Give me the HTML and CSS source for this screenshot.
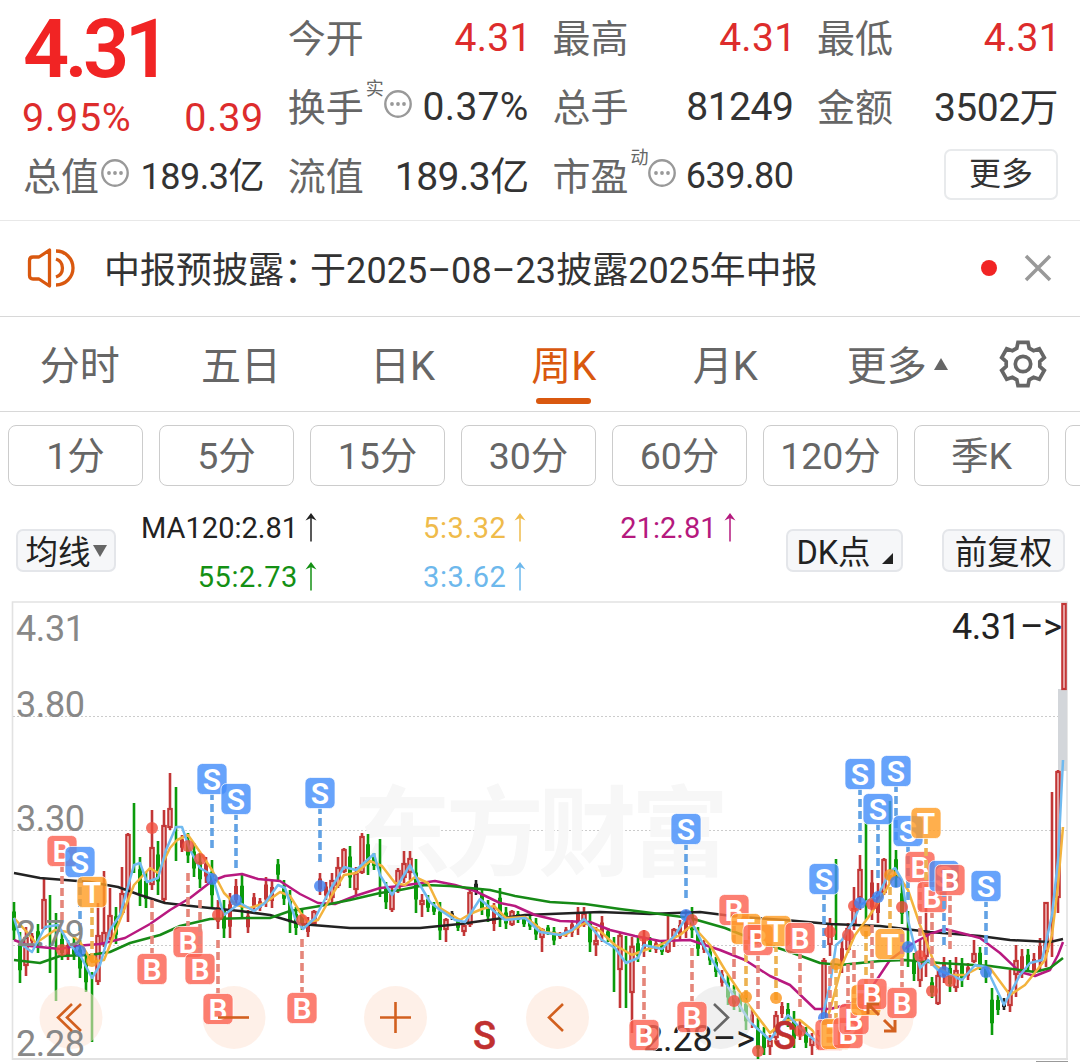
FILE: index.html
```html
<!DOCTYPE html>
<html lang="zh-CN">
<head>
    <meta charset="UTF-8">
    <meta name="viewport" content="width=device-width, initial-scale=1.0">
    <title>周K</title>
    <link rel="stylesheet" href="styles.css">
</head>
<body>
    <svg class="defs" width="0" height="0">
        <symbol id="more" viewBox="0 0 28 28">
            <circle cx="14" cy="14" r="12.7" fill="none" stroke="#999" stroke-width="2.4"/>
            <circle cx="8" cy="14" r="1.9" fill="#999"/>
            <circle cx="14" cy="14" r="1.9" fill="#999"/>
            <circle cx="20" cy="14" r="1.9" fill="#999"/>
        </symbol>
        <symbol id="up" viewBox="0 0 12 29">
            <path d="M6 28.5V3" stroke="currentColor" stroke-width="1.5"/>
            <path d="M6 0L11.5 7.5L6 5L0.5 7.5Z" fill="currentColor"/>
        </symbol>
    </svg>

    <section class="quote">
        <div class="price">
            <div class="last">4.31</div>
            <div class="change"><span>9.95%</span><span>0.39</span></div>
        </div>
        <div class="cell"><label>今开</label><b class="red">4.31</b></div>
        <div class="cell"><label>最高</label><b class="red">4.31</b></div>
        <div class="cell"><label>最低</label><b class="red">4.31</b></div>
        <div class="cell"><label>换手</label><sup>实</sup><svg class="more"><use href="#more"/></svg><b class="rate">0.37%</b></div>
        <div class="cell"><label>总手</label><b>81249</b></div>
        <div class="cell"><label>金额</label><b class="cjk">3502万</b></div>
        <div class="cell"><label>总值</label><svg class="more"><use href="#more"/></svg><b class="small cjk">189.3亿</b></div>
        <div class="cell"><label>流值</label><b class="cjk">189.3亿</b></div>
        <div class="cell"><label>市盈</label><sup>动</sup><svg class="more"><use href="#more"/></svg><b class="small">639.80</b></div>
        <div class="cell"><button class="more-btn">更多</button></div>
    </section>

    <section class="notice">
        <svg class="speaker" viewBox="0 0 48 42" fill="none" stroke="#d9580f" stroke-width="3.3">
            <path d="M22.500 3V39L12 32H6Q2.500 32 2.500 28.500V13.500Q2.500 10 6 10H12Z" stroke-linejoin="round"/>
            <path d="M29 12A9.500 9.500 0 0 1 29 30"/>
            <path d="M29 4A17 17 0 0 1 29 38"/>
        </svg>
        <p>中报预披露<i>：</i>于<span>2025–08–23</span>披露<span>2025</span>年中报</p>
        <em class="dot"></em>
        <svg class="close" viewBox="0 0 28 28"><path d="M2 2L26 26M26 2L2 26" stroke="#999" stroke-width="3.5"/></svg>
    </section>

    <nav class="tabs">
        <a>分时</a>
        <a>五日</a>
        <a>日K</a>
        <a class="active">周K</a>
        <a>月K</a>
        <a class="drop">更多</a>
        <svg class="gear" viewBox="-24 -24 48 48" fill="none" stroke="#666" stroke-width="3.7">
            <path d="M-6.200 -15.800L-5 -21.700H5L6.200 -15.800L10.600 -13.300L16.300 -15.200L21.300 -6.500L16.800 -2.500V2.500L21.300 6.500L16.300 15.200L10.600 13.300L6.200 15.800L5 21.700H-5L-6.200 15.800L-10.600 13.300L-16.300 15.200L-21.300 6.500L-16.800 2.500V-2.500L-21.300 -6.500L-16.300 -15.200L-10.600 -13.300Z"/>
            <circle r="7.700"/>
        </svg>
    </nav>

    <div class="periods">
        <button>1分</button>
        <button>5分</button>
        <button>15分</button>
        <button>30分</button>
        <button>60分</button>
        <button>120分</button>
        <button>季K</button>
        <button></button>
    </div>

    <section class="legend">
        <button class="ma-btn">均线<i></i></button>
        <div class="ma">
            <span class="c120">MA120:2.81<svg><use href="#up"/></svg></span>
            <span class="c5">5:3.32<svg><use href="#up"/></svg></span>
            <span class="c21">21:2.81<svg><use href="#up"/></svg></span>
            <span class="c55">55:2.73<svg><use href="#up"/></svg></span>
            <span class="c3">3:3.62<svg><use href="#up"/></svg></span>
        </div>
        <button class="dk-btn">DK点<i></i></button>
        <button class="fq-btn">前复权</button>
    </section>

    <svg id="chart" viewBox="0 600 1080 462"></svg>
    <script src="chart.js"></script>
</body>
</html>
```
FILE: styles.css
```css
* {
    box-sizing: border-box;
}
body {
    margin: 0;
    width: 1080px;
    height: 1062px;
    overflow: hidden;
    background: #fff;
    color: #333;
    font-family: Roboto, "Noto Sans CJK SC", sans-serif;
}
button {
    padding: 0;
    background: none;
    font-family: inherit;
    white-space: nowrap;
}
.defs {
    position: absolute;
}

/* quote header */
.quote {
    display: grid;
    grid-template-columns: repeat(4, 240px);
    grid-template-rows: repeat(3, 69px);
    column-gap: 24.7px;
    height: 221px;
    padding: 3px 0 0 24px;
    border-bottom: 1px solid #e8e8e8;
}
.price {
    grid-row: span 2;
    color: #f12424;
}
.last {
    height: 78px;
    margin-left: -1px;
    font-size: 81px;
    line-height: 93px;
    font-weight: 600;
    letter-spacing: -4.6px;
}
.change {
    display: flex;
    justify-content: space-between;
    margin-left: -2px;
    font-size: 39.500px;
    line-height: 73px;
    letter-spacing: 0.7px;
    color: #dd2c2c;
}
.cell {
    display: flex;
    align-items: center;
    font-size: 39px;
    white-space: nowrap;
}
.cell label {
    margin: 0 0 4px -1px;
    font-size: 38px;
    color: #666;
}
.cell b {
    margin-left: auto;
    font-weight: 400;
    letter-spacing: -0.5px;
}
.cell .red {
    margin-right: -3px;
    letter-spacing: 0.3px;
    color: #dd2c2c;
}
.cell .rate {
    letter-spacing: 0.3px;
}
.cell .small {
    font-size: 36px;
}
.cell .cjk {
    margin-bottom: 6px;
}
.cell sup {
    margin: 0 -2px 36px 2px;
    font-size: 18px;
    line-height: 18px;
    color: #666;
}
.more {
    width: 28px;
    height: 28px;
    margin: 0 0 6px 2px;
}
.more-btn {
    width: 114px;
    height: 51px;
    margin: 0 0 3px auto;
    border: 2px solid #e8eaec;
    border-radius: 7px;
    font-size: 32px;
    line-height: 46px;
    color: #333;
}

/* notice */
.notice {
    display: flex;
    align-items: center;
    height: 96px;
    padding: 0 28px 2px 27px;
    border-bottom: 1px solid #d8d8d8;
}
.speaker {
    width: 48px;
    height: 42px;
}
.notice p {
    margin: 0 0 2px 29px;
    font-size: 36px;
}
.notice i {
    font-style: normal;
    letter-spacing: -10px;
}
.notice span {
    letter-spacing: 0.1px;
}
.dot {
    width: 16px;
    height: 16px;
    margin-left: auto;
    border-radius: 50%;
    background: #f12424;
}
.close {
    width: 28px;
    height: 28px;
    margin-left: 27px;
}

/* tabs */
.tabs {
    display: grid;
    grid-template-columns: repeat(6, 161.400px) auto;
    height: 95px;
    margin-left: -1px;
    border-bottom: 1px solid #d8d8d8;
    font-size: 40px;
    line-height: 100px;
    text-align: center;
    color: #666;
}
.tabs a {
    position: relative;
}
.tabs .active {
    color: #d9580f;
}
.active::after {
    content: "";
    position: absolute;
    left: 53px;
    top: 81px;
    width: 55px;
    height: 6px;
    border-radius: 3px;
    background: #d9580f;
}
.drop::after {
    content: "";
    position: absolute;
    left: 128px;
    top: 41px;
    border: 7px solid transparent;
    border-top: 0;
    border-bottom: 12px solid #666;
}
.gear {
    width: 48px;
    height: 48px;
    margin: 23px 0 0 32px;
}

/* periods */
.periods {
    display: flex;
    gap: 16px;
    overflow: hidden;
    padding: 13px 0 0 8px;
}
.periods button {
    flex: 0 0 135px;
    height: 61px;
    border: 1.500px solid #ccc;
    border-radius: 8px;
    font-size: 37.500px;
    line-height: 54px;
    color: #666;
}

/* moving averages */
.legend {
    display: flex;
    align-items: flex-start;
    height: 114px;
    padding: 43px 15px 0 16px;
}
.legend button {
    height: 43px;
    padding-top: 3px;
    border: 2px solid #e4e6ea;
    border-radius: 7px;
    background: #f6f7f9;
    font-size: 32.500px;
    line-height: 38px;
    color: #222;
}
.ma-btn {
    width: 100px;
}
.ma-btn i {
    display: inline-block;
    margin: 0 0 7px 2px;
    border: 7px solid transparent;
    border-bottom: 0;
    border-top: 12px solid #666;
}
.ma {
    display: grid;
    grid-template-columns: 201px 208.500px 210px;
    grid-auto-rows: 49px;
    margin-top: -26px;
}
.ma span {
    display: flex;
    align-items: center;
    justify-content: flex-end;
    font-size: 29px;
}
.ma svg {
    width: 12px;
    height: 29px;
    margin-left: 7px;
}
.c120 {
    color: #222;
}
.c5 {
    color: #efbb4b;
}
.c21 {
    color: #b5197e;
}
.c55 {
    color: #149014;
}
.c3 {
    color: #6db8ec;
}
.c5, .c55, .c3 {
    letter-spacing: 0.6px;
}
.dk-btn {
    width: 117px;
    margin-left: auto;
}
.dk-btn i {
    display: inline-block;
    margin-left: 11px;
    border-left: 11px solid transparent;
    border-bottom: 11px solid #222;
}
.fq-btn {
    width: 123px;
    margin-left: 39px;
}

/* chart */
#chart {
    display: block;
    width: 1080px;
    height: 462px;
}
.watermark {
    font-size: 98px;
    font-weight: 700;
    fill: #f7f7f7;
}
.axis {
    font-size: 36px;
    fill: #888;
}
.mark {
    font-size: 36px;
    fill: #222;
}
.sell {
    font-size: 38px;
    font-weight: 500;
    fill: #c03030;
    stroke: #c03030;
    stroke-width: 0.5px;
}
.badge {
    font-size: 30px;
    font-weight: 600;
    fill: #fff;
    text-anchor: middle;
}
```
FILE: chart.js
```javascript
// one entry per week: colour, high, low, then body top and bottom where it is hollow
const candles = `g902-940 g932-983 r927-976-937-966 r933-944 g924-953 r878-930-899-929 g895-973 g913-1001 g932-960 r940-960
g937-960 g940-978 g953-992 g972-1042 r903-985-935-982 r871-947-932-945 r888-940-915-939 g907-944 r867-915-893-913 r833-922-834-890
g803-873 g857-906 g872-908 r810-890-847-885 g841-895 r810-902-825-900 r773-830-808-828 g787-861 r835-852 g833-863
g843-877 g853-888 r857-883 g860-907 r900-929 g900-938 r893-938 r879-907 g875-918 r910-933
r893-910 r898-911 r877-907 r880-908 g859-880 g880-905 g890-933 g907-935 g910-930 r917-937
r910-925-911-924 r873-895 r882-900 r873-903-880-898 r857-888-867-886 r848-873-849-872 g846-888 r867-895-873-890 r833-874-836-873 g834-875
g853-870 g839-897 g882-909 r887-912-892-910 r868-893-870-891 r851-883-863-878 r851-880-858-873 g859-913 r894-917-900-905 g895-912
g902-915 g902-940 r918-942-919-930 k911-920 g918-931 r922-936-925-932 r887-927-892-925 k880-895 g888-915 g900-922
r903-931 g888-927 g907-929 r910-926-911-925 g911-923 g916-927 g916-930 g918-940 r928-952-929-938 g925-935
g927-945 r932-939 r927-937 r920-937 r907-935 r907-927-913-925 g913-952 r927-956-940-945 r916-942 g928-942
g937-992 r933-1008-935-970 g936-1008 r937-1033-946-993 g937-962 r930-957 g937-952 r940-953 g942-955 r915-953-942-952
r928-947-929-937 r920-940 r910-938 g907-938 g927-956 r940-953 g947-965 g957-977 r970-987 g975-1005
g985-1010 g993-1012 g995-1030 r1010-1028 g1018-1059 g1027-1055 r1035-1055-1040-1047 r1011-1040-1015-1038 r1002-1018 g1003-1027
g1011-1048 r1020-1040 g1027-1048 r1033-1055-1038-1046 r1030-1050 r958-1027-960-1025 r918-956-923-945 g859-940 r940-973 r923-953-928-950
r887-930-908-925 r855-910-869-898 g823-920 r870-920 r883-923 r858-895-859-893 g801-870 g850-887 g883-924 g911-967
g953-981 r940-987-957-981 r900-977-933-957 g977-998 r970-1005-975-1004 r957-983 g960-992 r957-992-970-988 g958-987 r963-980
r940-963-953-962 g947-970 g960-983 g988-1035 g995-1015 k998-1010 r970-1012-990-1006 r945-997-960-975 r949-978 g949-972
r953-977 r938-970 r902-967-902-952 r792-957 r770-913-771-898 r603-690-603-690`.split(/\s+/);

const lines = {
    '#222222': '14,873 40,878 90,882 118,887 140,895 165,903 200,907 240,911 270,915 300,924 350,928 420,928 460,924 525,915 600,912 650,914 700,912 740,917 785,920 830,924 880,926 930,932 980,936 1010,940 1050,942 1063,939',
    '#b8197f': '14,940 30,946 60,949 75,946 100,944 125,938 150,924 170,910 190,898 212,881 225,876 242,874 258,879 280,881 300,894 318,903 335,904 355,896 380,888 400,886 435,881 455,885 475,891 500,903 515,906 535,915 560,921 590,922 610,930 635,936 660,941 690,940 720,950 745,960 770,976 790,985 815,1009 830,1009 850,1004 870,990 890,960 910,945 930,934 945,929 965,934 980,938 1000,953 1020,972 1035,976 1050,970 1058,955 1063,942',
    '#168a16': '14,960 40,963 60,956 90,955 110,952 130,943 160,935 180,926 210,919 250,918 270,918 290,911 320,906 350,900 380,893 400,890 425,885 450,886 490,890 515,896 550,902 585,904 620,909 660,914 690,918 725,928 760,942 790,952 820,963 840,965 880,961 905,960 940,963 990,966 1035,972 1050,968 1063,958',
    '#f3b33d': '14,918 25,930 36,943 55,930 68,932 80,942 92,962 104,960 116,930 128,900 134,885 150,868 158,873 170,848 177,840 188,835 200,852 212,870 224,893 236,905 250,908 265,903 280,892 290,896 300,912 308,922 318,920 332,895 344,875 356,873 370,861 382,866 395,883 405,885 415,877 428,883 440,908 460,920 470,914 482,909 494,906 506,918 525,917 545,932 565,935 585,923 600,931 615,945 632,955 645,950 660,945 680,935 692,925 710,945 725,970 745,1000 770,1033 785,1020 800,1020 812,1030 820,1040 830,1010 842,965 855,935 870,915 886,890 896,872 908,890 920,925 935,965 950,975 965,975 980,967 990,968 1010,995 1025,985 1045,960 1052,935 1058,885 1063,827',
    '#70baf0': '14,918 22,945 32,952 45,927 58,925 70,945 80,955 92,978 100,965 110,930 120,915 134,865 140,863 147,882 158,878 166,850 176,827 182,827 190,850 200,868 212,875 224,915 240,903 254,911 265,903 278,885 285,888 295,918 303,929 315,918 330,890 344,867 356,870 374,854 380,875 392,895 410,865 420,885 430,902 440,910 455,920 465,922 480,899 495,912 505,920 525,918 540,932 560,935 572,930 584,919 602,940 615,948 626,963 638,958 644,945 662,949 675,935 688,915 705,948 730,990 750,1022 770,1040 788,1015 800,1028 812,1038 820,1045 824,1010 830,985 836,945 842,940 854,920 860,905 878,895 890,872 895,868 902,880 908,920 920,968 928,960 938,970 950,975 962,980 975,965 986,967 1004,1005 1020,975 1030,963 1042,960 1052,915 1058,860 1063,760'
};

// letter, x, badge y, dot y
const trades = [
    ['B', 62, 851, 950], ['S', 80, 862, 951], ['T', 92, 892, 961], ['B', 152, 969, 828], ['B', 188, 942, 846],
    ['B', 200, 969, 859], ['S', 212, 779, 879], ['B', 218, 1009, 915], ['S', 236, 799, 900], ['B', 302, 1008, 920],
    ['S', 320, 793, 886], ['B', 644, 1035, 936], ['S', 686, 829, 915], ['B', 692, 1017, 920], ['B', 734, 910, 1001],
    ['T', 746, 929, 997], ['B', 758, 940, 1051], ['T', 776, 931, 998], ['B', 800, 938, 1031], ['S', 824, 879, 1018],
    ['B', 830, 1035, 932], ['T', 836, 1034, 964], ['B', 848, 1033, 935], ['B', 854, 1019, 906], ['S', 860, 774, 903],
    ['T', 866, 1000, 931], ['B', 872, 994, 904], ['S', 878, 809, 897], ['T', 890, 944, 875], ['S', 896, 771, 882],
    ['B', 902, 1003, 907], ['S', 908, 831, 947], ['B', 920, 867, 956], ['T', 926, 823, null], ['B', 932, 897, 991],
    ['S', 944, 876, 972], ['B', 950, 880, 981], ['S', 986, 886, 972]
];

const candleColors = { r: '#c23636', g: '#0b9b0b', k: '#222' };
const tradeColors = { B: ['#fb6353', '#f04c3c', '#e5867a'], S: ['#458ffa', '#3b7ef0', '#62a2e4'], T: ['#ff9e26', '#fb9418', '#edb252'] };

let svg = '';

// frame and grid
svg += '<path d="M12.500 1060V602H1067V1060" fill="none" stroke="#e2e2e2" stroke-width="1.600"/>';
svg += '<path d="M12 1059H1068" stroke="#e2e2e2" stroke-width="2"/>';
svg += '<path d="M1036 1061.500H1068" stroke="#999"/>';
[716.5, 830.5, 945.5].forEach(y => {
    svg += `<path d="M13 ${y}H1067" stroke="#ccc" stroke-dasharray="2 2"/>`;
});
svg += '<text class="watermark" x="353" y="868" textLength="376">东方财富</text>';
svg += '<rect x="1058" y="689" width="9" height="82" fill="#d3d6da"/>';

candles.forEach((c, i) => {
    const x = 14 + i * 6;
    const color = candleColors[c[0]];
    const [high, low, top, bottom] = c.slice(1).split('-').map(Number);
    if (top) {
        if (top > high) svg += `<path d="M${x} ${high}V${top}" stroke="${color}" stroke-width="2.600"/>`;
        if (low > bottom) svg += `<path d="M${x} ${bottom}V${low}" stroke="${color}" stroke-width="2.600"/>`;
        svg += `<rect x="${x - 1.7}" y="${top + 1}" width="3.400" height="${Math.max(bottom - top - 2, 1)}" fill="#fbe6e6" stroke="${color}" stroke-width="2.200"/>`;
    } else {
        svg += `<path d="M${x} ${high}V${low}" stroke="${color}" stroke-width="2.600"/>`;
        if (low - high < 55) {
            const pad = (low - high) * 0.25;
            svg += `<path d="M${x} ${high + pad}V${low - pad}" stroke="${color}" stroke-width="4"/>`;
        }
    }
});

for (const color in lines) {
    svg += `<polyline points="${lines[color]}" fill="none" stroke="${color}" stroke-width="2.500" stroke-linejoin="round"/>`;
}

// round control buttons
[71, 234, 395.5, 557.5, 720.5, 882].forEach((x, i) => {
    svg += `<circle cx="${x}" cy="1017.500" r="31.500" fill="${i === 4 ? '#e4e4e4' : '#fde3d6'}" fill-opacity="0.550"/>`;
});
svg += '<text class="mark" x="643" y="1051" textLength="112">2.28–&gt;</text>';
svg += '<text class="mark" x="952" y="639" textLength="110">4.31–&gt;</text>';

trades.forEach(([letter, x, y, dot]) => {
    const [fill, dotFill, dash] = tradeColors[letter];
    const dir = dot !== null && dot < y ? -1 : 1;
    svg += `<path d="M${x} ${y + dir * 69}V${y + dir * 15}" stroke="${dash}" stroke-width="3.600" stroke-dasharray="8 4" fill="none"/>`;
    if (dot !== null) svg += `<circle cx="${x}" cy="${dot}" r="6" fill="${dotFill}" fill-opacity="0.800"/>`;
    svg += `<rect x="${x - 15}" y="${y - 15.5}" width="30" height="31" rx="5.500" fill="${fill}" fill-opacity="0.820" stroke="#fff" stroke-opacity="0.700"/>`;
    svg += `<text class="badge" x="${x}" y="${y + 10.5}">${letter}</text>`;
});

svg += '<text class="sell" x="473" y="1049">S</text><text class="sell" x="773" y="1049">S</text>';
[['4.31', 641], ['3.80', 717], ['3.30', 831], ['2.79', 946], ['2.28', 1056]].forEach(([text, y]) => {
    svg += `<text class="axis" x="16" y="${y}" textLength="69">${text}</text>`;
});

// control icons
svg += `<g fill="none" stroke="#d2601f" stroke-width="2.600">
    <path d="M72 1004L58 1017.500L72 1031M81 1004L67 1017.500L81 1031"/>
    <path d="M218 1017.500H249"/>
    <path d="M380 1017.500H411M395.500 1002V1033"/>
    <path d="M563 1004L549 1017.500L563 1031"/>
    <path d="M714 1004L728 1017.500L714 1031" stroke="#666"/>
    <path d="M879 1015L868 1004M868 1014V1004H879M884 1020L895 1031M895 1020V1031H884" stroke-width="3"/>
</g>`;

document.getElementById('chart').innerHTML = svg;
```
